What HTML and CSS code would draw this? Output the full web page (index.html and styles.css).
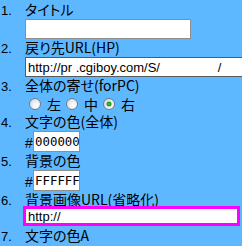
FILE: index.html
```html
<!DOCTYPE html>
<html lang="ja">
<head>
<meta charset="utf-8">
<link rel="stylesheet" href="styles.css">
</head>
<body>
<ol class="form">
  <li class="item">
    <span class="num">1.</span>
    <div class="body">
      <div class="label">タイトル</div>
      <input class="text title-input" type="text" value="">
    </div>
  </li>
  <li class="item">
    <span class="num">2.</span>
    <div class="body">
      <div class="label">戻り先URL(HP)</div>
      <input class="text url-input" type="text" value="http://pr .cgiboy.com/S/                /">
    </div>
  </li>
  <li class="item">
    <span class="num">3.</span>
    <div class="body">
      <div class="label">全体の寄せ(forPC)</div>
      <div class="radios">
        <label class="opt"><input class="radio" type="radio" name="align">左</label>
        <label class="opt"><input class="radio" type="radio" name="align">中</label>
        <label class="opt"><input class="radio" type="radio" name="align" checked>右</label>
      </div>
    </div>
  </li>
  <li class="item">
    <span class="num">4.</span>
    <div class="body">
      <div class="label">文字の色(全体)</div>
      <div class="color-row"><span class="hash">#</span><input class="text color-input" type="text" value="000000"></div>
    </div>
  </li>
  <li class="item">
    <span class="num">5.</span>
    <div class="body">
      <div class="label">背景の色</div>
      <div class="color-row"><span class="hash">#</span><input class="text color-input" type="text" value="FFFFFF"></div>
    </div>
  </li>
  <li class="item">
    <span class="num">6.</span>
    <div class="body">
      <div class="label">背景画像URL(省略化)</div>
      <input class="text focus-input" type="text" value="http://">
    </div>
  </li>
  <li class="item">
    <span class="num">7.</span>
    <div class="body">
      <div class="label">文字の色A</div>
    </div>
  </li>
</ol>
</body>
</html>
```

FILE: styles.css
```css
html, body {
  margin: 0;
  padding: 0;
  background: #5eb8ff;
  overflow: hidden;
}
body {
  font-family: "Noto Sans CJK JP", "Liberation Sans", sans-serif;
  font-size: 14px;
  color: #000;
  font-feature-settings: "palt";
}
.form {
  list-style: none;
  margin: 0;
  padding: 1px 0 0 0;
  overflow: hidden;
  width: 242px;
}
.item {
  display: grid;
  grid-template-columns: 25px 1fr;
  align-items: start;
}
.num {
  line-height: 16px;
  padding: 2px 0 0 1px;
  font-family: "Liberation Sans", sans-serif;
  font-size: 13px;
}
.body {
  display: flex;
  flex-direction: column;
  align-items: flex-start;
  min-width: 0;
}
.label {
  line-height: 16px;
  height: 16px;
  white-space: nowrap;
}
.text {
  box-sizing: border-box;
  margin: 2px 0 0 0;
  padding: 0 2px;
  font-family: "Liberation Sans", sans-serif;
  font-size: 13px;
  color: #000;
  background: #fff;
  outline: none;
}
.title-input {
  width: 166px;
  height: 20px;
  border: 1px solid #8e8e8e;
}
.url-input {
  width: 240px;
  height: 20px;
  border: 1px solid #5a5a5a;
  border-right: none;
  white-space: pre;
}
.radios {
  display: flex;
  height: 19px;
  align-items: center;
  padding-left: 4px;
  margin-top: 1px;
}
.opt {
  display: flex;
  align-items: center;
  margin-right: 5px;
  line-height: 16px;
}
.radio {
  appearance: none;
  -webkit-appearance: none;
  box-sizing: border-box;
  width: 12px;
  height: 12px;
  margin: 0 6px 0 0;
  border-radius: 50%;
  border: 1px solid #6f7f8f;
  background: radial-gradient(circle at 65% 65%, #ffffff 0, #eef0f2 40%, #c8ccd2 100%);
  position: relative;
}
.radio:checked::after {
  content: "";
  position: absolute;
  left: 3px;
  top: 3px;
  width: 4px;
  height: 4px;
  border-radius: 50%;
  background: #2fae2f;
  box-shadow: 0 0 0 0.5px #1f8a1f;
}
.color-row {
  display: flex;
  align-items: center;
  margin-top: 2px;
}
.hash {
  width: 8px;
  font-family: "Liberation Sans", sans-serif;
  font-size: 14px;
  line-height: 16px;
  padding-top: 3px;
}
.color-input {
  margin: 0;
  width: 47px;
  height: 21px;
  border: 1px solid #8e8e8e;
  font-family: "DejaVu Sans Mono", monospace;
  font-size: 12.4px;
  padding: 0 0 0 1px;
}
.focus-input {
  width: 213px;
  height: 16px;
  margin: 1px 0 3px 0;
  border: 1px solid #ff00ff;
  box-shadow: 0 0 0 2px #ff00ff;
  padding: 0 2px;
}
```
